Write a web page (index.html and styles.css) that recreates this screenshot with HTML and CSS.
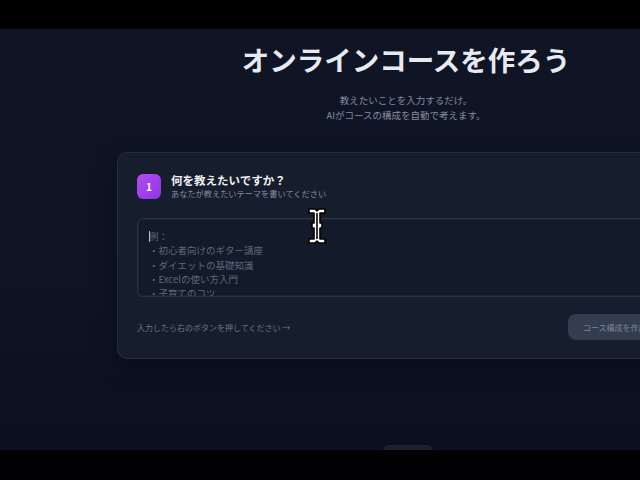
FILE: index.html
```html
<!DOCTYPE html>
<html lang="ja">
<head>
<meta charset="utf-8">
<title>オンラインコースを作ろう</title>
<link rel="stylesheet" href="styles.css">
</head>
<body>
<div class="bar"></div>
<main class="screen">
  <div class="page">
    <h1 class="title">オンラインコースを作ろう</h1>
    <p class="lead">教えたいことを入力するだけ。<br>AIがコースの構成を自動で考えます。</p>
    <section class="card">
      <div class="step">
        <div class="badge">1</div>
        <div class="step-text">
          <h2 class="step-title">何を教えたいですか？</h2>
          <p class="step-sub">あなたが教えたいテーマを書いてください</p>
        </div>
      </div>
      <div class="field">
        <span class="caret"></span>
        <div class="placeholder">例：<br>・初心者向けのギター講座<br>・ダイエットの基礎知識<br>・Excelの使い方入門<br>・子育てのコツ</div>
      </div>
      <div class="card-foot">
        <span class="hint">入力したら右のボタンを押してください →</span>
        <button class="submit">コース構成を作成する</button>
      </div>
    </section>
    <div class="peek"></div>
  </div>
  <svg class="ibeam" width="20" height="38" viewBox="0 0 20 38">
    <path d="M2 2 H8 L10 4 L12 2 H18 V6 H13 V16 H15 V21 H13 V32 H18 V36 H12 L10 34 L8 36 H2 V32 H7 V21 H5 V16 H7 V6 H2 Z" fill="#fff" stroke="#000" stroke-width="1.6" stroke-linejoin="round"/>
    <path d="M10 6 V32" stroke="#000" stroke-width="1.6"/>
  </svg>
</main>
<div class="bar bar-bottom"></div>
</body>
</html>
```

FILE: styles.css
```css
* { box-sizing: border-box; }
html, body { margin: 0; padding: 0; }
body {
  width: 640px;
  height: 480px;
  overflow: hidden;
  background: #000;
  font-family: "Noto Sans CJK JP", "Noto Sans", sans-serif;
}
.bar { height: 29px; background: #000; }
.bar-bottom { height: 30px; background: #020204; }
.screen {
  position: relative;
  height: 421px;
  overflow: hidden;
  background: linear-gradient(180deg, #0f1525 0%, #0e1424 60%, #0b1020 100%);
}
.page {
  width: 578px;
  margin-left: 117px;
  padding-top: 12px;
}
.title {
  margin: 0;
  text-align: center;
  font-size: 27.5px;
  line-height: 36px;
  font-weight: 700;
  color: #e6eaf1;
}
.lead {
  margin: 16px 0 0;
  text-align: center;
  font-size: 9.5px;
  line-height: 15px;
  color: #848da0;
}
.card {
  margin-top: 29px;
  background: #161d2d;
  border: 1px solid rgba(255,255,255,0.07);
  border-radius: 10px;
  padding: 20px 19px 18px;
  box-shadow: 0 8px 24px rgba(0,0,0,0.35);
}
.step { display: flex; align-items: center; gap: 10px; }
.badge {
  width: 24px;
  height: 25px;
  border-radius: 6px;
  background: linear-gradient(135deg, #b04cf0, #8f35e6);
  color: #fff;
  font-size: 10px;
  font-weight: 700;
  display: flex;
  align-items: center;
  justify-content: center;
}
.step-text { display: flex; flex-direction: column; }
.step-title {
  margin: 0;
  font-size: 11.5px;
  line-height: 15px;
  font-weight: 700;
  color: #eef1f6;
}
.step-sub {
  margin: 0;
  font-size: 8.2px;
  line-height: 11px;
  color: #838ca0;
}
.field {
  position: relative;
  margin-top: 19px;
  height: 79px;
  border: 1px solid #2b3447;
  box-shadow: inset 0 0 0 1px #1b2234;
  border-radius: 6px;
  background: #131a2a;
  padding: 10px 11px;
  overflow: hidden;
}
.placeholder {
  font-size: 9.5px;
  line-height: 14.3px;
  color: #5f687b;
}
.caret {
  position: absolute;
  left: 11px;
  top: 12px;
  width: 1px;
  height: 11px;
  background: #b9c0cd;
}
.card-foot {
  margin-top: 17px;
  display: flex;
  align-items: center;
  justify-content: space-between;
}
.hint { font-size: 8px; color: #6a7386; }
.submit {
  width: 107px;
  height: 26px;
  border: 0;
  border-radius: 8px;
  background: #343d50;
  color: #7a8498;
  font-family: inherit;
  font-size: 8px;
  text-align: left;
  padding-left: 15px;
  white-space: nowrap;
  overflow: hidden;
}
.peek {
  width: 50px;
  height: 12px;
  margin: 86px 0 0 266px;
  border-radius: 8px;
  background: rgba(255,255,255,0.07);
}
.ibeam {
  position: absolute;
  left: 307px;
  top: 178px;
}
```
